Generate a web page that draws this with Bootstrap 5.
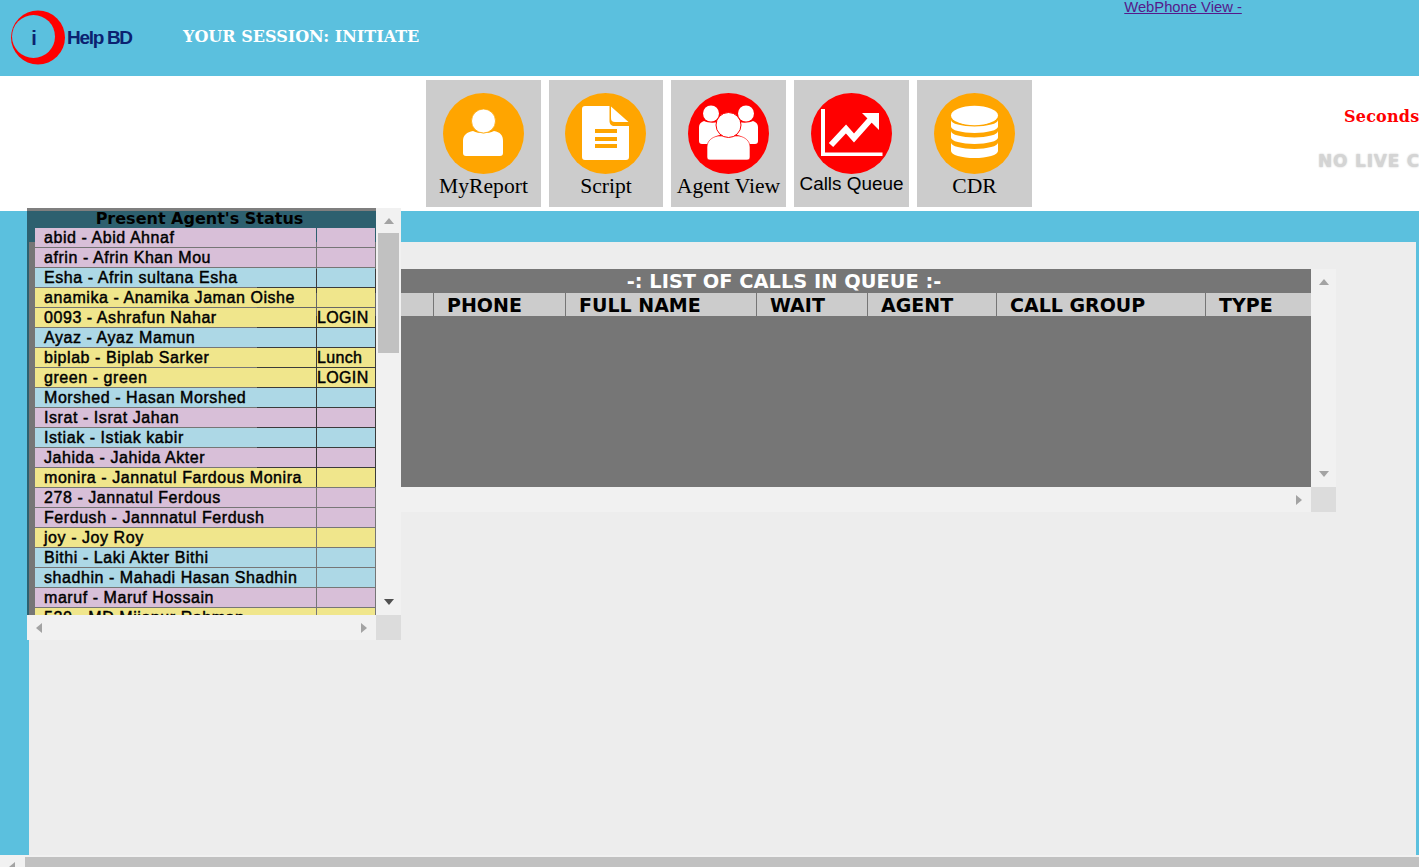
<!DOCTYPE html>
<html lang="en">
<head>
<meta charset="UTF-8">
<meta name="viewport" content="width=device-width, initial-scale=1.0">
<title>iHelp BD - Agent Panel</title>
<link href="https://cdn.jsdelivr.net/npm/bootstrap@5.3.0/dist/css/bootstrap.min.css" rel="stylesheet">
<style>
    html, body { height: 867px; overflow: hidden; }
    body { background: #5bc0de; font-family: "Liberation Sans", Arial, sans-serif; }
    .top-head { height: 76px; background: #5bc0de; }
    .logo-box { width: 56px; height: 56px; margin-left: 11px; }
    .logo-i { font: 700 20px "Liberation Sans", sans-serif; fill: #0b2270; }
    .logo-text { width: 65px; font-size: 19px; font-weight: 700; letter-spacing: -1.3px; color: #0b2270; white-space: nowrap; }
    .session-text { margin-left: 51px; margin-top: -4px; font: 700 16px "DejaVu Serif", serif; color: #fff; white-space: nowrap; }
    .phone-link { margin-left: 705px; align-self: flex-start; font-size: 14.75px; line-height: 14px; color: #551a8b; white-space: nowrap; }
    .tool-band { height: 135px; background: #fff; padding: 4px 0 4px 426px; }
    .tool-tile { flex: none; width: 115px; height: 127px; margin-right: 8px; background: #ccc; padding-top: 13px; color: #000; font: 21.6px/1 "Liberation Serif", serif; text-decoration: none; white-space: nowrap; }
    .tool-tile:nth-child(2) { width: 114px; }
    .tool-tile:nth-child(2) svg { margin-right: 1px; }
    .tool-tile svg { display: block; flex: none; width: 81px; height: 81px; margin-bottom: 2px; }
    .tool-sans { margin-top: -1px; font: 18.900px/1 "Liberation Sans", sans-serif; }
    .side-info { flex: none; width: 101px; margin-left: auto; overflow: hidden; white-space: nowrap; }
    .sec-text { margin: 27px 0 0 26px; font: 700 16px/20px "DejaVu Serif", serif; letter-spacing: .2px; color: #f00; }
    .live-text { margin-top: 24px; font: 700 17px/20px "DejaVu Sans", sans-serif; letter-spacing: .8px; color: #d4d4d4; text-shadow: 0 0 2px #c4c4c4; }
    .page-body { position: relative; height: 644px; padding: 31px 3px 0 29px; }
    .work-area { height: 100%; background: #ededed; padding: 27px 0 0 228px; }
    .queue-box { display: grid; grid-template-columns: 1054px 25px; grid-template-rows: 218px 25px; width: 1079px; }
    .queue-view { background: rgba(0,0,0,.5); }
    .queue-title { height: 24px; color: #fff; font: 700 19.400px/25px "DejaVu Sans", sans-serif; text-align: center; }
    .queue-cols { display: flex; gap: 1px; height: 23px; }
    .queue-cols div { flex: none; background: #ccc; padding-left: 13px; font: 700 19px/25px "DejaVu Sans", sans-serif; color: #000; }
    .agent-box { position: absolute; top: -3px; left: 27px; display: grid; grid-template-columns: 349px 25px; grid-template-rows: 407px 25px; }
    .agent-view { background: rgba(0,0,0,.5); overflow: hidden; }
    .agent-title { height: 20px; color: #000; font: 700 16px/22px "DejaVu Sans", sans-serif; text-align: center; padding: 0 4px 0 0; }
    .agent-rows { display: flex; flex-direction: column; gap: 1px; padding: 0 1px 0 8px; }
    .agent-row { display: flex; flex: none; gap: 1px; height: 19px; font-size: 16px; line-height: 19px; letter-spacing: .56px; color: #000; -webkit-text-stroke: .45px #000; white-space: nowrap; }
    .agent-name { width: 281px; padding-left: 9px; }
    .agent-state { flex: 1; letter-spacing: .35px; }
    .c-purple > div { background: #d8bfd8; }
    .c-blue > div { background: #add8e6; }
    .c-khaki > div { background: #f0e68c; }
    .vbar, .hbar { background: #f1f1f1; }
    .vbar { padding: 10px 0; }
    .vthumb { width: 21px; height: 120px; margin-top: 9px; background: #c1c1c1; }
    .hbar { padding: 0 9px; }
    .bar-end { background: #dcdcdc; }
    .arr { width: 0; height: 0; border: 0 solid transparent; }
    .arr-up { border-width: 0 5.5px 6px; border-bottom-color: #a3a3a3; }
    .arr-down { border-width: 6px 5.5px 0; border-top-color: #505050; }
    .arr-down-lt { border-top-color: #a3a3a3; }
    .arr-left { border-width: 5.5px 6px 5.5px 0; border-right-color: #a3a3a3; }
    .arr-right { border-width: 5.5px 0 5.5px 6px; border-left-color: #a3a3a3; }
    .page-hbar { height: 12px; background: #f1f1f1; overflow: hidden; }
    .page-hbar-start { flex: none; width: 25px; padding: 7px 0 0 9px; }
    .page-thumb { background: #c1c1c1; margin-top: 2px; height: 10px; }
</style>
</head>
<body>

<header class="top-head d-flex align-items-center">
    <svg class="logo-box flex-shrink-0" viewBox="0 0 56 56">
        <circle cx="27" cy="27.5" r="27" fill="#f00"/>
        <circle cx="22.500" cy="26.500" r="21.500" fill="#5bc0de"/>
        <text class="logo-i" x="23" y="35" text-anchor="middle">i</text>
    </svg>
    <div class="logo-text">Help BD</div>
    <div class="session-text">YOUR SESSION: INITIATE</div>
    <a class="phone-link" href="#">WebPhone View -</a>
</header>

<section class="tool-band d-flex">
    <a class="tool-tile d-flex flex-column align-items-center" href="#">
        <svg viewBox="0 0 81 81"><circle cx="40.500" cy="40.500" r="40.500" fill="#ffa500"/><path d="M20 48c0-6 4-9 10-10 6 3 15 3 21 0 6 1 9 4 9 10v12c0 2-1 3-3 3H23c-2 0-3-1-3-3z" fill="#fff"/><circle cx="40.500" cy="28" r="12" fill="#fff" stroke="#ffa500" stroke-width=".8"/></svg>
        MyReport
    </a>
    <a class="tool-tile d-flex flex-column align-items-center" href="#">
        <svg viewBox="0 0 81 81"><circle cx="40.500" cy="40.500" r="40.500" fill="#ffa500"/><path d="M20 13h24.500v15c0 3 2 5 5 5H64v31c0 2-1 3-3 3H20c-2 0-3-1-3-3V16c0-2 1-3 3-3z" fill="#fff"/><path d="M46 13.500l17.500 15.500H50c-3 0-4-1.500-4-4z" fill="#fff"/><path d="M30 36h22v4H30zM30 44h22v4H30zM30 51h22v4H30z" fill="#ffa500"/></svg>
        Script
    </a>
    <a class="tool-tile d-flex flex-column align-items-center" href="#">
        <svg viewBox="0 0 81 81"><circle cx="40.500" cy="40.500" r="40.500" fill="#f00"/><circle cx="23" cy="20.500" r="8" fill="#fff"/><circle cx="58" cy="20.500" r="8" fill="#fff"/><path d="M11 34c0-3 2-5 5-6 4 2 10 2 14 1l2 13c-5 1-10 5-11 9h-7c-2 0-3-1-3-3z" fill="#fff"/><path d="M70 34c0-3-2-5-5-6-4 2-10 2-14 1l-2 13c5 1 10 5 11 9h7c2 0 3-1 3-3z" fill="#fff"/><path d="M19 54c0-6 5-10 11-11h21c6 1 11 5 11 11v10c0 2-1 3-3 3H22c-2 0-3-1-3-3z" fill="#fff" stroke="#f00" stroke-width=".6"/><circle cx="40.500" cy="32" r="12.500" fill="#fff" stroke="#f00" stroke-width="1"/></svg>
        Agent View
    </a>
    <a class="tool-tile d-flex flex-column align-items-center" href="#">
        <svg viewBox="0 0 81 81"><circle cx="40.500" cy="40.500" r="40.500" fill="#f00"/><path d="M10 16h4v43.500h57.500v3.500H10z" fill="#fff"/><path d="M20 52l15-16 8 9 16-18" fill="none" stroke="#fff" stroke-width="6"/><path d="M51 20h17v17z" fill="#fff"/></svg>
        <span class="tool-sans">Calls Queue</span>
    </a>
    <a class="tool-tile d-flex flex-column align-items-center" href="#">
        <svg viewBox="0 0 81 81"><circle cx="40.500" cy="40.500" r="40.500" fill="#ffa500"/><ellipse cx="40.500" cy="22.500" rx="23.500" ry="9.700" fill="#fff"/><path d="M17 27a23.500 6.500 0 0 0 47 0v6.500a23.500 6.500 0 0 1-47 0z" fill="#fff"/><path d="M17 38a23.500 6.500 0 0 0 47 0v6.500a23.500 6.500 0 0 1-47 0z" fill="#fff"/><path d="M17 49.500a23.500 6.500 0 0 0 47 0v8.500a23.500 7 0 0 1-47 0z" fill="#fff"/></svg>
        CDR
    </a>
    <div class="side-info">
        <div class="sec-text">Seconds</div>
        <div class="live-text">NO LIVE CALL</div>
    </div>
</section>

<main class="page-body">
    <div class="work-area">
        <div class="queue-box">
            <div class="queue-view">
                <div class="queue-title">-: LIST OF CALLS IN QUEUE :-</div>
                <div class="queue-cols">
                    <div style="width:176px"></div>
                    <div style="width:131px">PHONE</div>
                    <div style="width:190px">FULL NAME</div>
                    <div style="width:110px">WAIT</div>
                    <div style="width:128px">AGENT</div>
                    <div style="width:208px">CALL GROUP</div>
                    <div style="width:105px">TYPE</div>
                </div>
            </div>
            <div class="vbar d-flex flex-column align-items-center justify-content-between">
                <span class="arr arr-up"></span>
                <span class="arr arr-down arr-down-lt"></span>
            </div>
            <div class="hbar d-flex justify-content-end align-items-center">
                <span class="arr arr-right"></span>
            </div>
            <div class="bar-end"></div>
        </div>
    </div>

    <div class="agent-box">
        <div class="agent-view">
            <div class="agent-title">Present Agent's Status</div>
            <div class="agent-rows" id="agentRows"></div>
        </div>
        <div class="vbar d-flex flex-column align-items-center">
            <span class="arr arr-up"></span>
            <div class="vthumb"></div>
            <span class="arr arr-down mt-auto"></span>
        </div>
        <div class="hbar d-flex justify-content-between align-items-center">
            <span class="arr arr-left"></span>
            <span class="arr arr-right"></span>
        </div>
        <div class="bar-end"></div>
    </div>
</main>

<div class="page-hbar d-flex">
    <div class="page-hbar-start"><div class="arr arr-left"></div></div>
    <div class="page-thumb flex-grow-1"></div>
</div>

<script src="https://cdn.jsdelivr.net/npm/bootstrap@5.3.0/dist/js/bootstrap.bundle.min.js"></script>
<script>
    // name, state, row colour
    const agents = [
        ['abid - Abid Ahnaf', '', 'c-purple'],
        ['afrin - Afrin Khan Mou', '', 'c-purple'],
        ['Esha - Afrin sultana Esha', '', 'c-blue'],
        ['anamika - Anamika Jaman Oishe', '', 'c-khaki'],
        ['0093 - Ashrafun Nahar', 'LOGIN', 'c-khaki'],
        ['Ayaz - Ayaz Mamun', '', 'c-blue'],
        ['biplab - Biplab Sarker', 'Lunch', 'c-khaki'],
        ['green - green', 'LOGIN', 'c-khaki'],
        ['Morshed - Hasan Morshed', '', 'c-blue'],
        ['Israt - Israt Jahan', '', 'c-purple'],
        ['Istiak - Istiak kabir', '', 'c-blue'],
        ['Jahida - Jahida Akter', '', 'c-purple'],
        ['monira - Jannatul Fardous Monira', '', 'c-khaki'],
        ['278 - Jannatul Ferdous', '', 'c-purple'],
        ['Ferdush - Jannnatul Ferdush', '', 'c-purple'],
        ['joy - Joy Roy', '', 'c-khaki'],
        ['Bithi - Laki Akter Bithi', '', 'c-blue'],
        ['shadhin - Mahadi Hasan Shadhin', '', 'c-blue'],
        ['maruf - Maruf Hossain', '', 'c-purple'],
        ['520 - MD Mijanur Rahman', '', 'c-khaki']
    ];
    document.getElementById('agentRows').innerHTML = agents.map(function (a) {
        return '<div class="agent-row ' + a[2] + '"><div class="agent-name">' + a[0] + '</div><div class="agent-state">' + a[1] + '</div></div>';
    }).join('');
</script>
</body>
</html>
